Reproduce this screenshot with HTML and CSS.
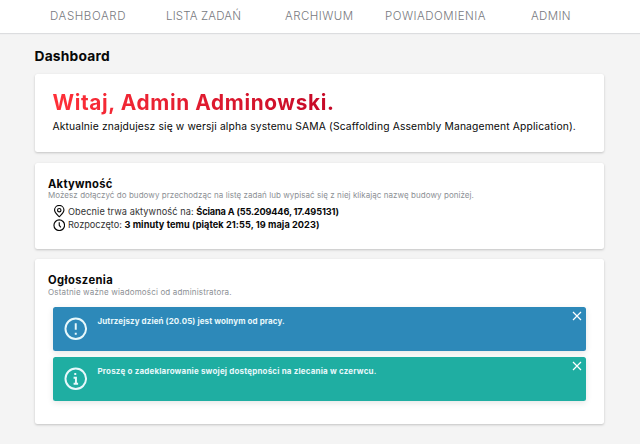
FILE: index.html
```html
<!DOCTYPE html>
<html lang="pl">
<head>
<meta charset="utf-8">
<title>Dashboard</title>
<link rel="stylesheet" href="styles.css">
</head>
<body>
<nav class="nav">
  <a class="nav-dashboard">DASHBOARD</a>
  <a class="nav-tasks">LISTA ZADAŃ</a>
  <a class="nav-archive">ARCHIWUM</a>
  <a class="nav-notices">POWIADOMIENIA</a>
  <a class="nav-admin">ADMIN</a>
</nav>
<main class="page">
  <h1 class="page-title">Dashboard</h1>
  <section class="card welcome">
    <h2 class="greeting">Witaj, Admin Adminowski.</h2>
    <p class="intro">Aktualnie znajdujesz się w wersji alpha systemu SAMA (Scaffolding Assembly Management Application).</p>
  </section>
  <section class="card activity">
    <h3 class="card-title">Aktywność</h3>
    <p class="subtitle">Możesz dołączyć do budowy przechodząc na listę zadań lub wypisać się z niej klikając nazwę budowy poniżej.</p>
    <div class="detail">
      <svg class="detail-icon" viewBox="0 0 24 24"><path d="M12 22.5C9.5 19.7 3 15.6 3 9.8a9 9 0 0 1 18 0c0 5.800-6.500 9.900-9 12.700Z"/><circle cx="12" cy="10" r="3.300"/></svg>
      <p><span class="label-place">Obecnie trwa aktywność na: </span><b class="place">Ściana A (55.209446, 17.495131)</b></p>
    </div>
    <div class="detail">
      <svg class="detail-icon" viewBox="0 0 24 24"><circle cx="12" cy="12" r="10.200"/><path d="M12 6v6l3 4"/></svg>
      <p><span>Rozpoczęto: </span><b class="time">3 minuty temu (piątek 21:55, 19 maja 2023)</b></p>
    </div>
  </section>
  <section class="card news">
    <h3 class="card-title news-title">Ogłoszenia</h3>
    <p class="subtitle news-subtitle">Ostatnie ważne wiadomości od administratora.</p>
    <div class="alerts">
      <div class="alert alert-blue">
        <svg class="alert-icon" viewBox="0 0 24 24"><circle cx="12" cy="12" r="10.500"/><path d="M12 6.500v6.500M12 16v2"/></svg>
        <p class="alert-first">Jutrzejszy dzień (20.05) jest wolnym od pracy.</p>
        <svg class="close" viewBox="0 0 10 10"><path d="M1 1l8 8M9 1L1 9"/></svg>
      </div>
      <div class="alert alert-green">
        <svg class="alert-icon" viewBox="0 0 24 24"><circle cx="12" cy="12" r="10.500"/><path d="M11.500 6.200v2M9.800 11h2.400v6M9.800 17h4.600"/></svg>
        <p class="alert-second">Proszę o zadeklarowanie swojej dostępności na zlecania w czerwcu.</p>
        <svg class="close" viewBox="0 0 10 10"><path d="M1 1l8 8M9 1L1 9"/></svg>
      </div>
    </div>
  </section>
</main>
</body>
</html>
```
FILE: styles.css
```css
* { box-sizing: border-box; margin: 0; }
body {
  height: 444px;
  overflow: hidden;
  background: #f4f4f4;
  color: #080808;
  font-family: Inter, "Noto Sans", sans-serif;
  white-space: nowrap;
}
svg { fill: none; stroke: currentColor; flex: none; }
.nav {
  display: flex;
  height: 33px;
  padding-left: 50px;
  background: #fff;
  box-shadow: 0 1px 1px #dcdddf;
  color: #77797e;
  font-size: 11.5px;
  font-weight: 300;
  line-height: 33px;
  letter-spacing: .35px;
}
.nav-dashboard { width: 116px; letter-spacing: .6px; }
.nav-tasks { width: 119px; letter-spacing: .15px; }
.nav-archive { width: 100px; letter-spacing: .45px; }
.nav-notices { width: 146px; letter-spacing: .5px; }
.page { padding: 13px 36px 0 34.5px; }
.page-title {
  height: 28px;
  font-size: 13.8px;
  font-weight: 700;
  line-height: 20px;
  letter-spacing: .2px;
}
.card {
  background: #fff;
  border-radius: 2.500px;
  box-shadow: 0 1px 3px rgba(0, 0, 0, .14), 0 1px 2px rgba(0, 0, 0, .07);
}
.welcome { height: 78px; margin-bottom: 11px; padding: 16px 18px; }
.greeting {
  width: max-content;
  background: linear-gradient(90deg, #ff3038, #c40827);
  background-clip: text;
  color: transparent;
  font-size: 20.8px;
  font-weight: 700;
  line-height: 26px;
  letter-spacing: .64px;
}
.intro { font-size: 10.3px; line-height: 21px; letter-spacing: .145px; }
.activity { height: 86px; margin-bottom: 10px; padding: 14px 13.500px; }
.card-title { font-size: 11.2px; font-weight: 700; line-height: 15px; letter-spacing: .27px; }
.activity .card-title { line-height: 14px; }
.news-title { letter-spacing: .4px; }
.subtitle { color: #8c9095; font-size: 8px; line-height: 8px; letter-spacing: .055px; }
.news-subtitle { letter-spacing: .16px; }
.detail {
  display: flex;
  align-items: center;
  gap: 3px;
  height: 13.500px;
  padding-left: 4.500px;
  font-size: 9.2px;
}
.subtitle + .detail { margin-top: 5.5px; }
.detail-icon { width: 12.500px; height: 12.500px; stroke-width: 2.200; }
.detail p { white-space: pre; }
.detail span { color: #333; }
.label-place { letter-spacing: .08px; }
.detail b { font-weight: 700; }
.place { letter-spacing: -.16px; }
.time { letter-spacing: .06px; }
.news { height: 165px; padding: 14px 13.500px; }
.alerts { display: grid; gap: 6px; padding: 10.500px 4.500px 0 5px; }
.alert {
  position: relative;
  display: flex;
  height: 44.300px;
  padding: 10.500px 11px 0 10.500px;
  border-radius: 2.500px;
  box-shadow: 0 2px 6px rgba(0, 0, 0, .1);
  color: #e8f8fb;
  font-size: 8px;
  font-weight: 700;
}
.alert p { margin-left: 10.500px; line-height: 8px; }
.alert-first { letter-spacing: .1px; }
.alert-second { letter-spacing: .18px; }
.alert-blue { background: #2d89b9; }
.alert-green { background: #1faea2; }
.alert-icon { width: 23.500px; height: 23.500px; stroke-width: 2; }
.close { position: absolute; top: 4px; right: 4px; width: 10px; height: 10px; stroke: #fff; stroke-width: 1.200; }
```
